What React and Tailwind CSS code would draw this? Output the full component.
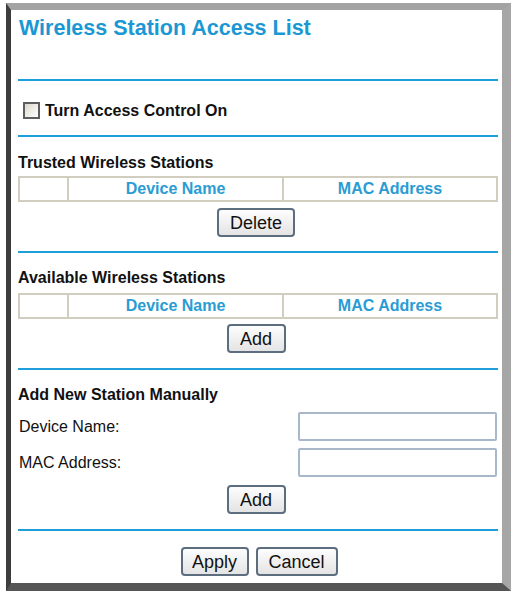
import React from "react";

const font = { fontFamily: '"Liberation Sans", Arial, sans-serif' };

function Line() {
  return <div className="h-[2px] bg-[#1e9fdb] mr-[4px]" />;
}

function Btn({ children, w }) {
  return (
    <button
      className={`h-[29px] ${w} border-2 border-[#5d6d80] rounded-[4px] bg-gradient-to-b from-[#fdfdfd] to-[#e4e4e4] text-[18px] leading-none text-[#111] flex items-center justify-center`}
    >
      {children}
    </button>
  );
}

function TableHead() {
  return (
    <div className="h-[26px] mr-[4px] flex border-2 border-[#d2cebf] text-[16px] font-bold text-[#2a9cd3]">
      <div className="w-[47px]" />
      <div className="w-[215px] border-l-2 border-[#d2cebf] flex items-center justify-center">
        Device Name
      </div>
      <div className="flex-1 border-l-2 border-[#d2cebf] flex items-center justify-center">
        MAC Address
      </div>
    </div>
  );
}

export default function App() {
  return (
    <div className="w-[515px] h-[595px] bg-white pt-[3px] pl-[6px] pr-[4px] pb-[4px]" style={font}>
      <div className="w-full h-full border-t-[7px] border-t-[#a3a3a3] border-l-[5px] border-l-[#3d3d3d] border-r-[9px] border-r-[#a6a6a6] border-b-[8px] border-b-[#555555] bg-white pl-[7px] flex flex-col">
        <div className="h-[69px] pt-[7px] pl-[1px]">
          <div className="text-[21.5px] leading-[22px] font-bold text-[#1b98d3]">
            Wireless Station Access List
          </div>
        </div>
        <Line />
        <div className="h-[54px] pt-[5px] flex items-center pl-[5px] gap-[5px]">
          <div className="w-[17px] h-[17px] border-2 border-[#5e5e5e] bg-gradient-to-br from-[#ddd8cc] to-white" />
          <span className="text-[16px] font-bold text-[#111]">Turn Access Control On</span>
        </div>
        <Line />
        <div className="h-[39px] pt-[17px] text-[16px] leading-[17px] font-bold text-[#111]">
          Trusted Wireless Stations
        </div>
        <TableHead />
        <div className="h-[49px] pt-[6px] flex justify-center pr-[8px]">
          <Btn w="w-[78px]">Delete</Btn>
        </div>
        <Line />
        <div className="h-[40px] pt-[16px] text-[16px] leading-[17px] font-bold text-[#111]">
          Available Wireless Stations
        </div>
        <TableHead />
        <div className="h-[49px] pt-[5px] flex justify-center pr-[8px]">
          <Btn w="w-[59px]">Add</Btn>
        </div>
        <Line />
        <div className="h-[42px] pt-[16px] text-[16px] leading-[17px] font-bold text-[#111]">
          Add New Station Manually
        </div>
        <div className="h-[29px] flex items-center justify-between pr-[5px] pl-[1px]">
          <span className="text-[16px] text-[#111]">Device Name:</span>
          <input className="w-[199px] h-[29px] border-2 border-[#a9b7cb] rounded-[2px] outline-none" />
        </div>
        <div className="h-[29px] mt-[7px] flex items-center justify-between pr-[5px] pl-[1px]">
          <span className="text-[16px] text-[#111]">MAC Address:</span>
          <input className="w-[199px] h-[29px] border-2 border-[#a9b7cb] rounded-[2px] outline-none" />
        </div>
        <div className="h-[52px] pt-[8px] flex justify-center pr-[8px]">
          <Btn w="w-[59px]">Add</Btn>
        </div>
        <Line />
        <div className="flex-1 pt-[16px] flex justify-center gap-[7px] pr-[2px]">
          <Btn w="w-[68px]">Apply</Btn>
          <Btn w="w-[82px]">Cancel</Btn>
        </div>
      </div>
    </div>
  );
}
